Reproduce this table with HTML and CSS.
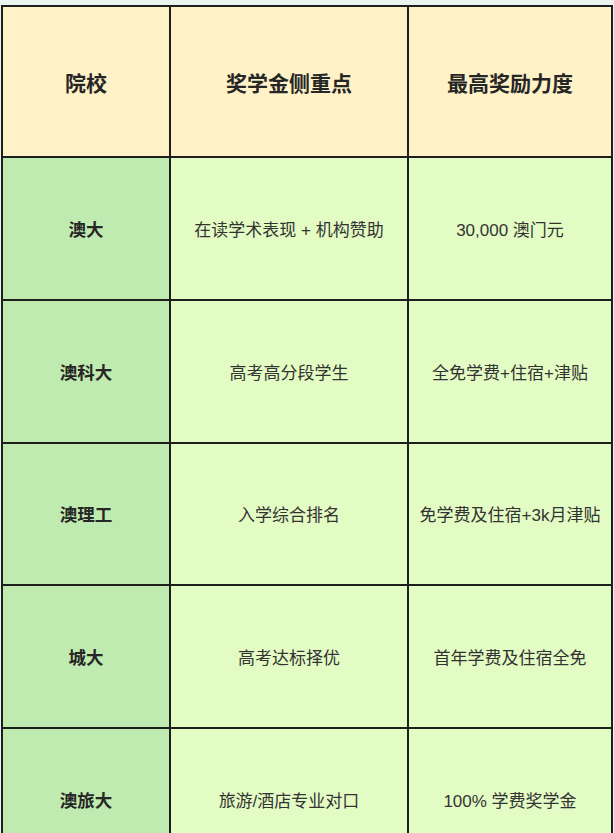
FILE: index.html
```html
<!DOCTYPE html>
<html lang="zh-CN">
<head>
<meta charset="utf-8">
<title>奖学金对比</title>
<link rel="stylesheet" href="styles.css">
</head>
<body>
<div class="table" role="table">
  <div class="cell head" role="columnheader">院校</div>
  <div class="cell head" role="columnheader">奖学金侧重点</div>
  <div class="cell head" role="columnheader">最高奖励力度</div>

  <div class="cell name">澳大</div>
  <div class="cell body">在读学术表现 + 机构赞助</div>
  <div class="cell body">30,000 澳门元</div>

  <div class="cell name">澳科大</div>
  <div class="cell body">高考高分段学生</div>
  <div class="cell body">全免学费+住宿+津贴</div>

  <div class="cell name">澳理工</div>
  <div class="cell body">入学综合排名</div>
  <div class="cell body">免学费及住宿+3k月津贴</div>

  <div class="cell name">城大</div>
  <div class="cell body">高考达标择优</div>
  <div class="cell body">首年学费及住宿全免</div>

  <div class="cell name">澳旅大</div>
  <div class="cell body">旅游/酒店专业对口</div>
  <div class="cell body">100% 学费奖学金</div>
</div>
</body>
</html>
```

FILE: styles.css
```css
html, body {
  margin: 0;
  padding: 0;
}
body {
  background: #ecf4ef;
  padding: 5px 0 0 1px;
  font-family: "Liberation Sans", "Noto Sans CJK SC", sans-serif;
  color: #2b2b2b;
}
.table {
  display: grid;
  grid-template-columns: 166px 236px 202px;
  grid-template-rows: 149px repeat(5, 140.75px);
  gap: 2px;
  padding: 2px;
  width: max-content;
  background: #1c1f1c;
}
.cell {
  display: flex;
  align-items: center;
  justify-content: center;
  text-align: center;
}
.head {
  background: #fff2c6;
  font-size: 21px;
  font-weight: bold;
  color: #262626;
}
.name {
  background: #c0ebb0;
  font-size: 17.5px;
  font-weight: bold;
  color: #262626;
}
.body {
  background: #e3fcc3;
  font-size: 17px;
  color: #333;
}
```
